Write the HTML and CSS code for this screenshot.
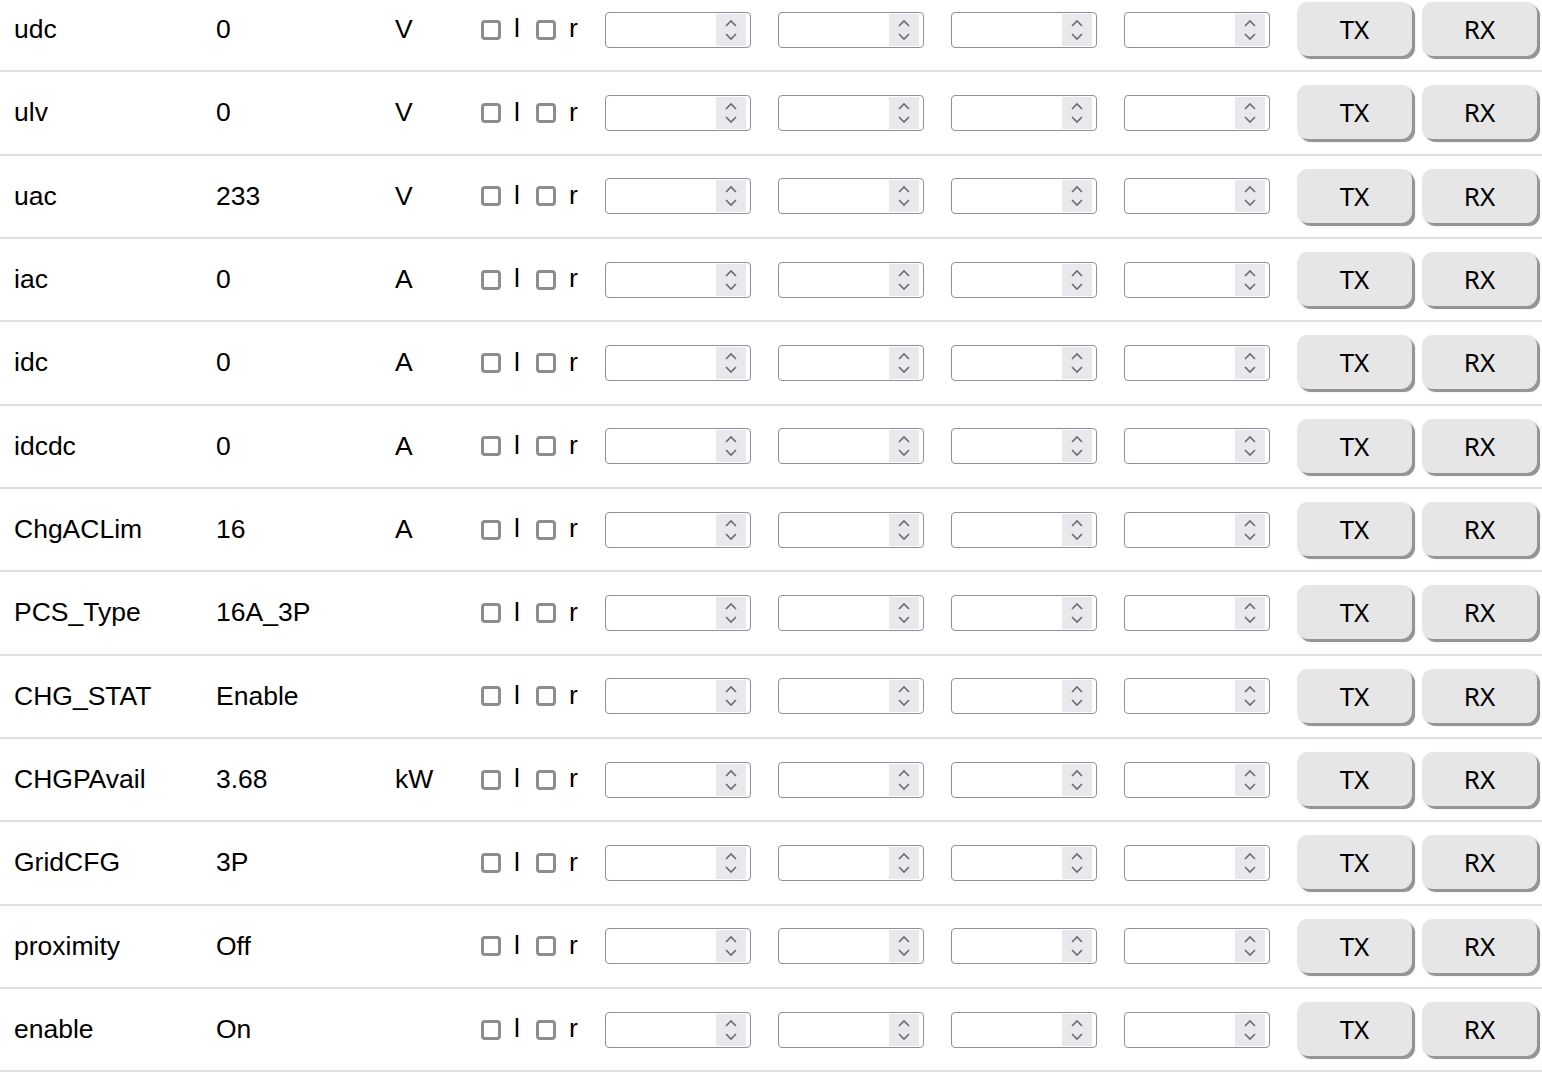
FILE: index.html
```html
<!DOCTYPE html>
<html>
<head>
<meta charset="utf-8">
<link rel="stylesheet" href="styles.css">
</head>
<body>
<div class="list" id="list"></div>
<script>
var data = [
["udc","0","V"],["ulv","0","V"],["uac","233","V"],["iac","0","A"],["idc","0","A"],["idcdc","0","A"],
["ChgACLim","16","A"],["PCS_Type","16A_3P",""],["CHG_STAT","Enable",""],["CHGPAvail","3.68","kW"],
["GridCFG","3P",""],["proximity","Off",""],["enable","On",""]];
var spin = '<span class="spin"><svg width="14" height="22" viewBox="0 0 14 22"><path d="M2 7 L7 2 L12 7" fill="none" stroke="#6b6b73" stroke-width="1.6"/><path d="M2 15 L7 20 L12 15" fill="none" stroke="#6b6b73" stroke-width="1.6"/></svg></span>';
var num = '<div class="num"><input class="field" type="text">' + spin + '</div>';
var html = '';
data.forEach(function(d){
  html += '<div class="row"><div class="name">'+d[0]+'</div><div class="value">'+d[1]+'</div><div class="unit">'+d[2]+'</div>' +
    '<div class="checks"><input type="checkbox" class="cb"><span class="lbl">l</span><input type="checkbox" class="cb cb2"><span class="lbl">r</span></div>' +
    num + num + num + num +
    '<button class="btn tx">TX</button><button class="btn rx">RX</button></div>';
});
document.getElementById('list').innerHTML = html;
</script>
</body>
</html>
```

FILE: styles.css
```css
html, body {
  margin: 0;
  padding: 0;
  background: #ffffff;
  overflow: hidden;
}
body {
  font-family: "Liberation Sans", Arial, sans-serif;
  font-size: 26.5px;
  color: #000;
}
.list {
  margin-top: -11px;
}
.row {
  display: flex;
  align-items: center;
  height: 83.333px;
  box-sizing: border-box;
  border-bottom: 2px solid #e0e0e0;
  padding-left: 14px;
}
.name { width: 202px; flex: none; }
.value { width: 179px; flex: none; }
.unit { width: 86px; flex: none; }
.checks {
  width: 124px;
  flex: none;
  display: flex;
  align-items: center;
}
.cb {
  appearance: none;
  -webkit-appearance: none;
  margin: 0 13px 0 0;
  width: 20px;
  height: 20px;
  box-sizing: border-box;
  border: 3px solid #8c8c91;
  border-radius: 4px;
  background: #fff;
}
.cb2 { margin-left: 16px; }
.lbl { line-height: 1; position: relative; top: -1px; }
.num {
  width: 146px;
  height: 36px;
  box-sizing: border-box;
  flex: none;
  margin-right: 27px;
  border: 1px solid #8f8f9d;
  border-radius: 4px;
  display: flex;
  align-items: center;
  padding: 2px 4px 2px 2px;
  background: #fff;
}
.num:nth-of-type(4) { margin-right: 28px; }
.field {
  flex: 1;
  min-width: 0;
  border: none;
  outline: none;
  height: 100%;
  padding: 0;
  font-size: 16px;
  background: transparent;
}
.spin {
  width: 30px;
  height: 32px;
  background: #e9e9ed;
  display: flex;
  align-items: center;
  justify-content: center;
}
.btn {
  width: 115px;
  height: 54px;
  flex: none;
  font-family: "Noto Sans", "Open Sans", sans-serif;
  font-size: 26px;
  color: #000;
  background: #e6e6e6;
  border: none;
  border-radius: 11px;
  box-shadow: 3px 3px 0 0 #959595, 2px 2px 3px 0 #bbbbbb;
  padding: 0;
  margin-top: -1px;
}
.rx { margin-left: 10px; }
```
